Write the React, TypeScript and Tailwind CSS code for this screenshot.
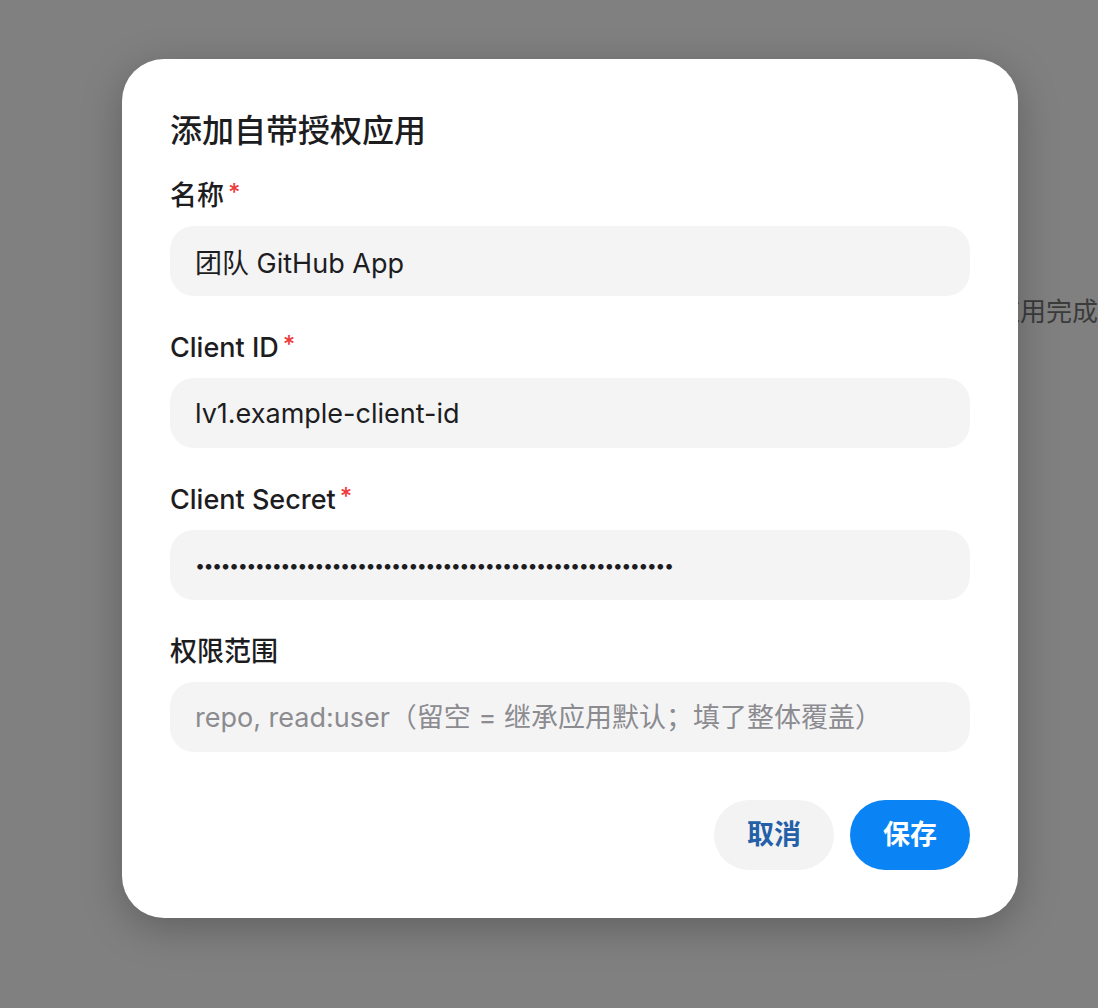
import { useState } from 'react'

const font = "font-['Inter','Noto_Sans_CJK_SC',sans-serif]"

function Label({ text, required }: { text: string; required?: boolean }) {
  return (
    <div className="flex h-[36px] items-center text-[27px] font-medium text-[#1d1d1f]">
      {text}
      {required && <span className="ml-[4px] -mt-[6px] text-[24px] leading-none text-[#ef3b3b]">*</span>}
    </div>
  )
}

export default function App() {
  const [name, setName] = useState('团队 GitHub App')
  const [clientId, setClientId] = useState('lv1.example-client-id')
  const [secret, setSecret] = useState('x'.repeat(56))
  const [scope, setScope] = useState('')

  const inputClass =
    'h-[70px] w-full rounded-[24px] bg-[#f4f4f5] px-[25px] text-[27px] text-[#1d1d1f] outline-none placeholder:text-[#8b8b90]'

  return (
    <div className={`relative h-[1008px] w-full overflow-hidden bg-[#808080] ${font}`}>
      {/* page behind the overlay */}
      <span className="absolute left-[942px] top-[292px] whitespace-nowrap text-[26px] text-[#3b3b3b]">
        授权应用完成
      </span>

      <div className="absolute left-[122px] top-[59px] w-[896px] rounded-[42px] bg-white px-[48px] pb-[48px] pt-[52px] shadow-[0_10px_40px_rgba(0,0,0,0.25)]">
        <h2 className="h-[40px] text-[32px] font-medium leading-[40px] text-[#1d1d1f]">添加自带授权应用</h2>

        <form
          className="mt-[27px] flex flex-col gap-[34px]"
          onSubmit={(event) => event.preventDefault()}
        >
          <div className="flex flex-col gap-[12px]">
            <Label text="名称" required />
            <input className={inputClass} value={name} onChange={(e) => setName(e.target.value)} />
          </div>

          <div className="flex flex-col gap-[12px]">
            <Label text="Client ID" required />
            <input className={inputClass} value={clientId} onChange={(e) => setClientId(e.target.value)} />
          </div>

          <div className="flex flex-col gap-[12px]">
            <Label text="Client Secret" required />
            <input
              type="password"
              className="h-[70px] w-full rounded-[24px] bg-[#f4f4f5] px-[25px] text-[18px] tracking-[-1.6px] text-[#1d1d1f] outline-none"
              value={secret}
              onChange={(e) => setSecret(e.target.value)}
            />
          </div>

          <div className="flex flex-col gap-[12px]">
            <Label text="权限范围" />
            <input
              className={inputClass}
              value={scope}
              placeholder="repo, read:user（留空 = 继承应用默认；填了整体覆盖）"
              onChange={(e) => setScope(e.target.value)}
            />
          </div>

          <div className="mt-[14px] flex justify-end gap-[16px]">
            <button
              type="button"
              className="h-[70px] w-[120px] rounded-full bg-[#f3f3f4] text-[27px] font-semibold text-[#2460a7]"
            >
              取消
            </button>
            <button
              type="submit"
              className="h-[70px] w-[120px] rounded-full bg-[#0a84f4] text-[27px] font-semibold text-white"
            >
              保存
            </button>
          </div>
        </form>
      </div>
    </div>
  )
}
